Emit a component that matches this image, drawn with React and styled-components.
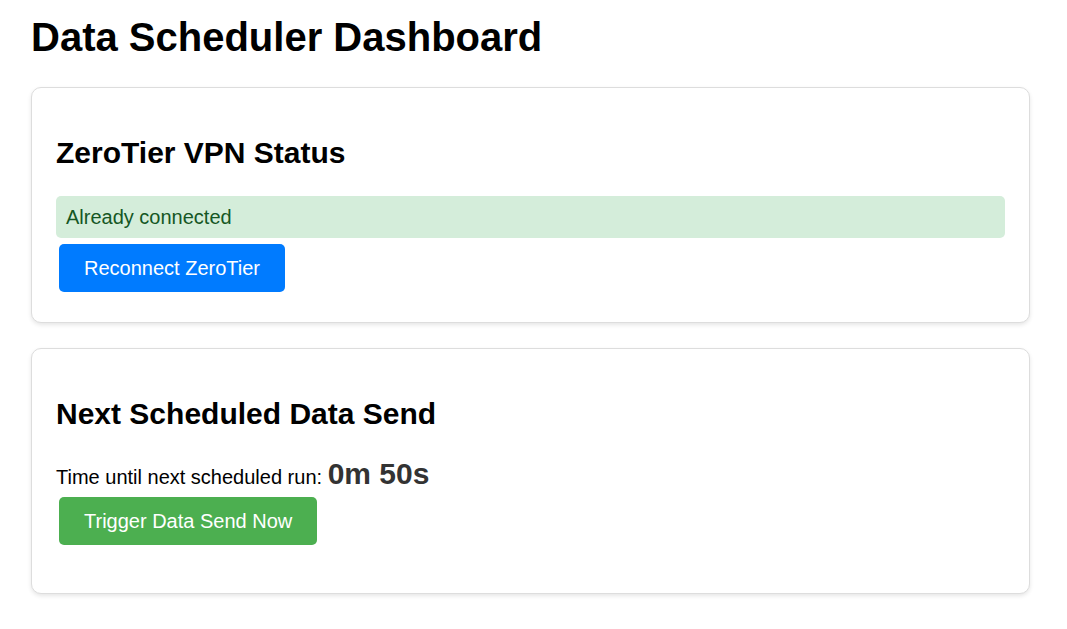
import styled, { createGlobalStyle } from 'styled-components';

const GlobalStyle = createGlobalStyle`
    body {
        margin: 0;
        padding: 15px 31px;
        font-family: "Liberation Sans", Arial, sans-serif;
        font-size: 20px;
        color: #000;
        background-color: #fff;
    }
`;

const Page = styled.div`
    width: 999px;
`;

const Title = styled.h1`
    margin: 0 0 27px 0;
    font-size: 40px;
    font-weight: 700;
`;

const Card = styled.section`
    box-sizing: border-box;
    width: 100%;
    margin-bottom: 25px;
    padding: 24px;
    border: 1px solid #ddd;
    border-radius: 10px;
    background-color: #fff;
    box-shadow: 0 2px 4px rgba(0, 0, 0, 0.1);
`;

const CardTitle = styled.h2`
    margin: 24px 0 26px 0;
    font-size: 30px;
    font-weight: 700;
`;

const Status = styled.div`
    padding: 10px;
    line-height: 22px;
    border-radius: 5px;
    color: #155724;
    background-color: #d4edda;
`;

const Countdown = styled.p`
    margin: 0;
`;

const Timer = styled.span`
    font-size: 30px;
    font-weight: 700;
    color: #333;
`;

const Button = styled.button`
    display: inline-block;
    margin: 6px 3px;
    padding: 12px 25px;
    border: 0;
    border-radius: 5px;
    font-family: inherit;
    font-size: 20px;
    line-height: 24px;
    color: #fff;
    background-color: ${props => props.$color};
    cursor: pointer;
`;

const Result = styled.div`
    min-height: 18px;
`;

export default () => {
    return (
        <>
        <GlobalStyle />
        <Page>
            <Title>Data Scheduler Dashboard</Title>
            <Card>
                <CardTitle>ZeroTier VPN Status</CardTitle>
                <Status>Already connected</Status>
                <Button $color="#007bff">Reconnect ZeroTier</Button>
            </Card>
            <Card>
                <CardTitle>Next Scheduled Data Send</CardTitle>
                <Countdown>
                    Time until next scheduled run: <Timer>0m 50s</Timer>
                </Countdown>
                <Button $color="#4caf50">Trigger Data Send Now</Button>
                <Result />
            </Card>
        </Page>
        </>
    )
}
